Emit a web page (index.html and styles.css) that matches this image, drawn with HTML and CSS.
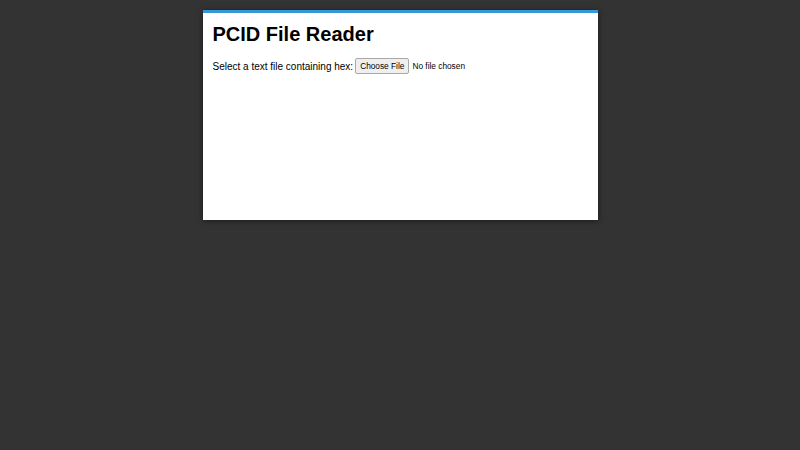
FILE: index.html
```html
<!DOCTYPE html>
<html lang="en">
<head>
<meta charset="utf-8">
<title>PCID File Reader</title>
<link rel="stylesheet" href="styles.css">
</head>
<body>
<div class="card">
  <h1 class="title">PCID File Reader</h1>
  <div class="row">
    <label class="label" for="file">Select a text file containing hex:</label>
    <input class="file" id="file" type="file" accept=".txt">
  </div>
</div>
</body>
</html>
```
FILE: styles.css
```css
html, body {
  margin: 0;
  padding: 0;
}
body {
  background: #333333;
  font-family: "Liberation Sans", Arial, sans-serif;
  padding-top: 10px;
  height: 450px;
  box-sizing: border-box;
}
.card {
  width: 375px;
  height: 187px;
  margin: 0 auto;
  padding: 10px;
  background: #ffffff;
  border-top: 3px solid #3498db;
  box-shadow: 0 1px 6px rgba(0, 0, 0, 0.5);
}
.title {
  font-size: 20px;
  font-weight: bold;
  margin: 0 0 12px 0;
  color: #000;
}
.row {
  display: flex;
  align-items: center;
  gap: 2px;
  font-size: 10px;
  color: #000;
}
.file {
  font-family: "Liberation Sans", Arial, sans-serif;
  font-size: 8.3px;
  color: #000;
}
.file::file-selector-button {
  font-family: "Liberation Sans", Arial, sans-serif;
  font-size: 8.3px;
  padding: 2px 4px;
  margin-right: 3px;
  border: 1px solid #a9a9a9;
  border-radius: 2px;
  background: #efefef;
  color: #000;
}
```
